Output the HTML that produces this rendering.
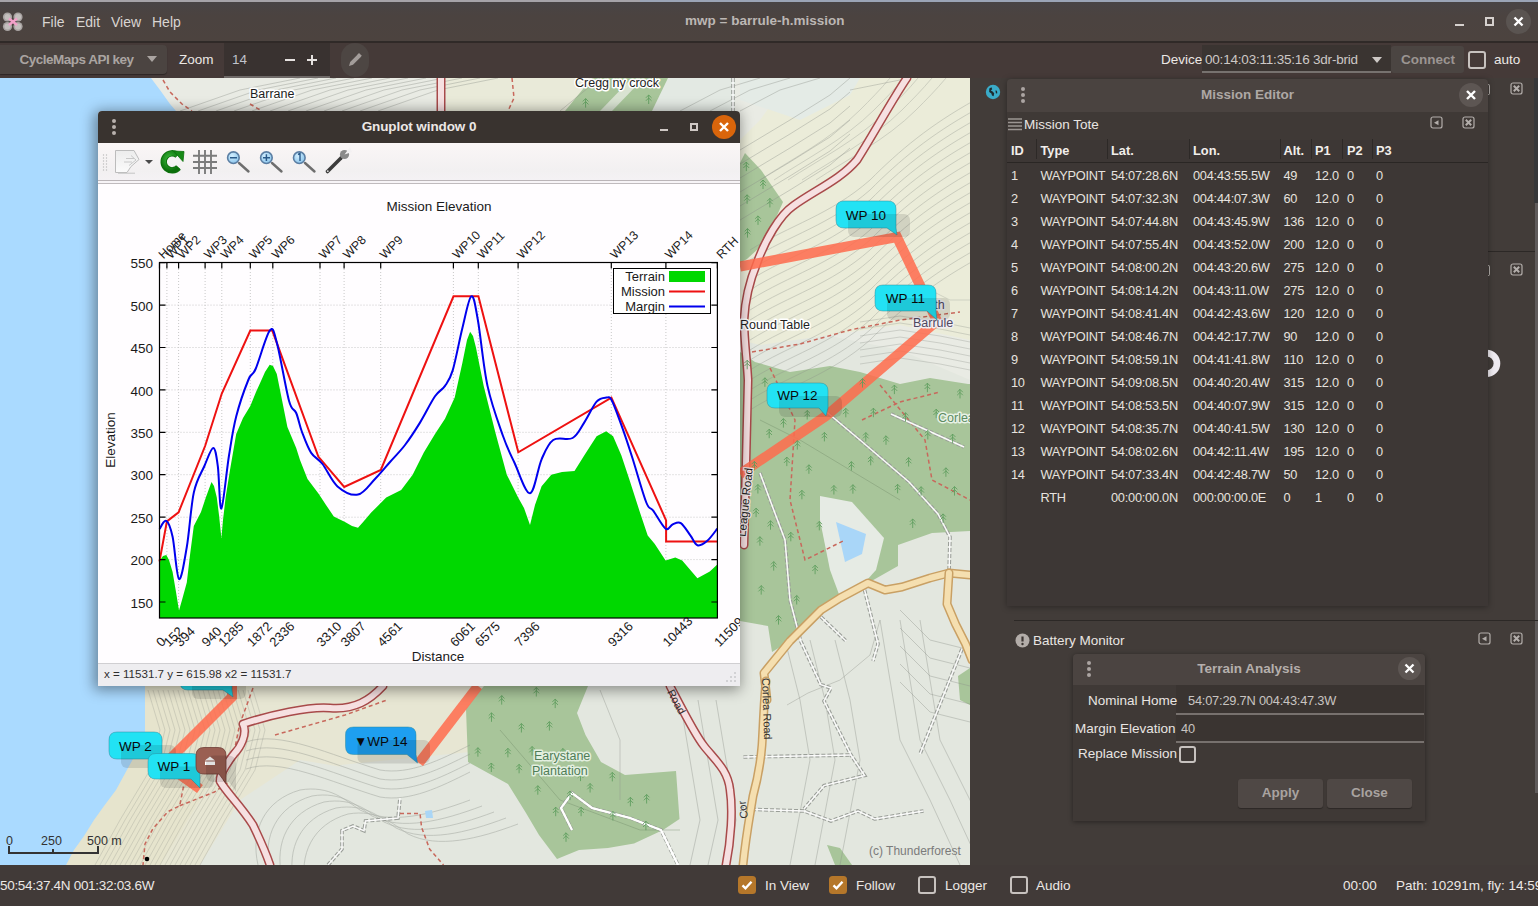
<!DOCTYPE html>
<html><head><meta charset="utf-8">
<style>
*{margin:0;padding:0;box-sizing:border-box}
html,body{width:1538px;height:906px;overflow:hidden;background:#3d3836;font-family:"Liberation Sans",sans-serif}
.a{position:absolute}
.t{position:absolute;white-space:nowrap;line-height:1}
#topline{left:0;top:0;width:1538px;height:2px;background:#a5a3a8}
#titlebar{left:0;top:2px;width:1538px;height:40px;background:linear-gradient(#484445,#4b4340 35%,#4c433f);border-bottom:1px solid #2f2a28}
#toolbar{left:0;top:42px;width:1538px;height:36px;background:#453a38;border-top:1px solid #302927}
#map{left:0;top:78px;width:970px;height:787px;background:#e6e8df;overflow:hidden}
#right{left:970px;top:78px;width:568px;height:787px;background:#423c39}
#status{left:0;top:865px;width:1538px;height:41px;background:#413a38}
#gp{left:98px;top:111px;width:642px;height:575px;background:#fffdff;border-radius:4px 4px 0 0;box-shadow:-2px 2px 14px 2px rgba(0,0,0,.4)}
#gptitle{left:0;top:0;width:642px;height:32px;background:#39332f;border-radius:4px 4px 0 0}
#gptool{left:0;top:32px;width:642px;height:41px;background:linear-gradient(#faf6f6,#f2f0f1 70%,#f5f2f5);border-bottom:1px solid #c0bbbe;box-shadow:inset 0 -2px 0 #f7f4f7,inset 0 -3px 0 #bbb5b8}
#gpstat{left:0;top:552px;width:642px;height:23px;background:#eeedf0;border-top:1px solid #d0cfd2}
.menu{font-size:14px;color:#d9d5d2;top:14.5px}
.tb{font-size:13.5px;color:#ece8e5}
.tbl{font-size:12.8px;color:#e6e2df;letter-spacing:-0.25px}
.hdr{font-size:12.8px;color:#f2eeeb;font-weight:bold}
.ck{position:absolute;width:18px;height:18px;border-radius:3px}
.ckon{background:#b5772a}
.ckoff{border:2px solid #c7c2bf}
</style></head><body>
<div id="topline" class="a"></div>
<div class="a" style="left:640px;top:0;width:898px;height:2px;background:#9aa4b6"></div>
<div id="titlebar" class="a"></div>
<!-- logo -->
<svg class="a" style="left:2px;top:12px" width="22" height="20" viewBox="0 0 22 20">
<g fill="#a9a4a2"><circle cx="5.5" cy="5" r="4.6"/><circle cx="16" cy="5" r="4.6"/><circle cx="5.5" cy="14.5" r="4.6"/><circle cx="16" cy="14.5" r="4.6"/></g>
<g fill="#c4bfbd"><circle cx="5.5" cy="5" r="3"/><circle cx="16" cy="5" r="3"/><circle cx="5.5" cy="14.5" r="3"/><circle cx="16" cy="14.5" r="3"/></g>
<path d="M7 6.5L15 13M15 6.5L7 13" stroke="#f2a0c8" stroke-width="2.6"/>
</svg>
<div class="t menu" style="left:42px">File</div>
<div class="t menu" style="left:76px">Edit</div>
<div class="t menu" style="left:111px">View</div>
<div class="t menu" style="left:152px">Help</div>
<div class="t" style="left:685px;top:14px;font-size:13.5px;font-weight:bold;color:#bcb7b4">mwp = barrule-h.mission</div>
<div class="a" style="left:1455px;top:24px;width:9px;height:2px;background:#d6d1ce"></div>
<div class="a" style="left:1485px;top:17px;width:9px;height:9px;border:2px solid #d6d1ce"></div>
<div class="a" style="left:1506px;top:9px;width:25px;height:25px;border-radius:13px;background:#5a5451"></div>
<svg class="a" style="left:1506px;top:9px" width="25" height="25"><path d="M8.5 8.5L16.5 16.5M16.5 8.5L8.5 16.5" stroke="#fff" stroke-width="2.4"/></svg>
<div id="toolbar" class="a"></div>
<!-- combo -->
<div class="a" style="left:0;top:45px;width:167px;height:29px;background:#4b4441;border-radius:0 4px 4px 0;box-shadow:0 1px 1px rgba(0,0,0,.35)"></div>
<div class="t" style="left:19.5px;top:53px;font-size:13.5px;font-weight:bold;color:#aaa4a1;letter-spacing:-0.5px">CycleMaps API key</div>
<svg class="a" style="left:147px;top:56px" width="10" height="6"><path d="M0 0h10L5 6z" fill="#aaa4a1"/></svg>
<div class="t tb" style="left:179px;top:53px">Zoom</div>
<div class="a" style="left:224px;top:43px;width:106px;height:35px;background:#393230;border-bottom:2px solid #6f6a68"></div>
<div class="t" style="left:232px;top:53px;font-size:13.5px;color:#c0c3cc">14</div>
<div class="a" style="left:285px;top:59px;width:10px;height:2px;background:#e6e2e0"></div>
<div class="a" style="left:307px;top:59px;width:10px;height:2px;background:#e6e2e0"></div>
<div class="a" style="left:311px;top:55px;width:2px;height:10px;background:#e6e2e0"></div>
<div class="a" style="left:341px;top:43px;width:28px;height:34px;border-radius:14px;background:#4d4643"></div>
<svg class="a" style="left:346px;top:51px" width="18" height="18"><path d="M3 15l1.2-4 8-8 2.8 2.8-8 8z" fill="#a39d9a"/><path d="M11.5 3.5l1.5-1.5 2.8 2.8-1.5 1.5z" fill="#a39d9a"/></svg>
<div class="t tb" style="left:1161px;top:53px">Device</div>
<div class="a" style="left:1202px;top:45px;width:189px;height:28px;background:#3a3431;border-bottom:2px solid #77726f"></div>
<div class="t" style="left:1205px;top:53px;font-size:13.5px;color:#cdc8c5;letter-spacing:-0.2px">00:14:03:11:35:16 3dr-brid</div>
<svg class="a" style="left:1372px;top:57px" width="10" height="6"><path d="M0 0h10L5 6z" fill="#cdc8c5"/></svg>
<div class="a" style="left:1391px;top:46px;width:73px;height:27px;background:#4b4542;border-radius:3px"></div>
<div class="t" style="left:1401px;top:53px;font-size:13.5px;font-weight:bold;color:#9b9592">Connect</div>
<div class="ck ckoff" style="left:1468px;top:51px"></div>
<div class="t tb" style="left:1494px;top:53px">auto</div>
<div id="map" class="a">
<svg class="a" style="left:0;top:0" width="970" height="787" viewBox="0 78 970 787">
<rect x="0" y="78" width="970" height="787" fill="#e3e7df"/>
<path d="M150 78H970V380L900 350L800 330L740 300V111H150Z" fill="#e9ebe4"/>
<path d="M790 78H970V340L900 325L830 335L760 345L740 340V140L760 120Z" fill="#ebecd9"/>
<path d="M740 100L800 120L850 95L860 78H740Z" fill="#e4ebe6"/>
<path d="M446 78H600L565 111H446Z" fill="#e9ead9"/>
<path d="M668 78H735V111H652Z" fill="#e3e9e3"/>
<path d="M145 686H500L470 760L360 770L300 760L240 800L200 865H66Z" fill="#e7e6d3"/>
<path d="M340 765L470 752L500 800L540 865H335Z" fill="#e3e7df"/>
<path d="M145 686H250L235 740L200 800L160 865H66L140 740Z" fill="#e6e4cd"/>
<path d="M0 78H151L160 90L170 104L176 111L176 686L145 686V733L138 750L128 768L116 790L104 806L94 820L84 836L74 850L66 865H0Z" fill="#aadaff"/>
<path d="M565 111L592 78H668L652 111Z" fill="#a8c59a"/>
<path d="M600 111L628 82L638 84L612 111Z" fill="#d9e3d2"/>
<path d="M740 163L745 153L761 170L783 202L775 220L758 249L747 259L740 263Z" fill="#a8c59a"/>
<path d="M740 352L755 362L790 372L830 366L860 372L900 384L930 378L968 384L970 384V531L932 533L898 545V566L868 583L840 597L821 610L790 641L772 652L768 626L740 621Z" fill="#a8c59a"/>
<path d="M484 686H588L577 713L585.5 735L601 762L625 775L676 771L679.5 819L663 830L634 843.5L608 848L579 850L557 859L539 835L526 813L508 784L468 762L466 709Z" fill="#a8c59a"/>
<path d="M827 845L840 848L852 865H835Z" fill="#a8c59a"/>
<path d="M958 676L970 668V705L960 700Z" fill="#a8c59a"/>
<path d="M820 496L852 502L884 538L876 570L858 590L840 597L830 570L820 520Z" fill="#e6ebe4"/>
<path d="M836 522L866 534L862 554L845 562Z" fill="#a9d6f8"/>
<g fill="none" stroke="#8d918a" stroke-width="0.70" opacity="0.55" stroke-linejoin="round"><path d="M740.0 150.0 L790.0 120.0 L830.0 95.0 L850.0 78.0"/><path d="M740.0 164.0 L790.0 134.0 L830.0 109.0 L850.0 92.0"/><path d="M740.0 178.0 L790.0 148.0 L830.0 123.0 L850.0 106.0"/><path d="M740.0 192.0 L790.0 162.0 L830.0 137.0 L850.0 120.0"/><path d="M740.0 206.0 L790.0 176.0 L830.0 151.0 L850.0 134.0"/><path d="M740.0 220.0 L790.0 190.0 L830.0 165.0 L850.0 148.0"/></g>
<g fill="none" stroke="#8d918a" stroke-width="0.70" opacity="0.50"><path transform="translate(0.0 0.0)" d="M750 250C790 225 830 215 870 180C900 150 930 125 975 100"/><path transform="translate(0.0 10.0)" d="M750 250C790 225 830 215 870 180C900 150 930 125 975 100"/><path transform="translate(0.0 20.0)" d="M750 250C790 225 830 215 870 180C900 150 930 125 975 100"/><path transform="translate(0.0 30.0)" d="M750 250C790 225 830 215 870 180C900 150 930 125 975 100"/><path transform="translate(0.0 40.0)" d="M750 250C790 225 830 215 870 180C900 150 930 125 975 100"/><path transform="translate(0.0 50.0)" d="M750 250C790 225 830 215 870 180C900 150 930 125 975 100"/><path transform="translate(0.0 60.0)" d="M750 250C790 225 830 215 870 180C900 150 930 125 975 100"/><path transform="translate(0.0 70.0)" d="M750 250C790 225 830 215 870 180C900 150 930 125 975 100"/><path transform="translate(0.0 80.0)" d="M750 250C790 225 830 215 870 180C900 150 930 125 975 100"/><path transform="translate(0.0 90.0)" d="M750 250C790 225 830 215 870 180C900 150 930 125 975 100"/><path transform="translate(0.0 100.0)" d="M750 250C790 225 830 215 870 180C900 150 930 125 975 100"/><path transform="translate(0.0 110.0)" d="M750 250C790 225 830 215 870 180C900 150 930 125 975 100"/><path transform="translate(0.0 120.0)" d="M750 250C790 225 830 215 870 180C900 150 930 125 975 100"/><path transform="translate(0.0 130.0)" d="M750 250C790 225 830 215 870 180C900 150 930 125 975 100"/><path transform="translate(0.0 140.0)" d="M750 250C790 225 830 215 870 180C900 150 930 125 975 100"/><path transform="translate(0.0 150.0)" d="M750 250C790 225 830 215 870 180C900 150 930 125 975 100"/><path transform="translate(0.0 160.0)" d="M750 250C790 225 830 215 870 180C900 150 930 125 975 100"/></g>
<g fill="none" stroke="#8d918a" stroke-width="0.70" opacity="0.55" stroke-linejoin="round"><path d="M850.0 90.0 L900.0 80.0"/></g>
<g fill="none" stroke="#8d918a" stroke-width="0.70" opacity="0.45"><path transform="translate(0.0 0.0)" d="M760 180C790 160 830 140 860 110C870 100 880 90 890 78"/><path transform="translate(14.0 0.0)" d="M760 180C790 160 830 140 860 110C870 100 880 90 890 78"/><path transform="translate(28.0 0.0)" d="M760 180C790 160 830 140 860 110C870 100 880 90 890 78"/><path transform="translate(42.0 0.0)" d="M760 180C790 160 830 140 860 110C870 100 880 90 890 78"/><path transform="translate(56.0 0.0)" d="M760 180C790 160 830 140 860 110C870 100 880 90 890 78"/></g>
<g fill="none" stroke="#8d918a" stroke-width="0.70" opacity="0.45" stroke-linejoin="round"><path d="M860.0 322.0 L900.0 316.0 L940.0 322.0 L970.0 328.0"/><path d="M860.0 329.0 L900.0 323.0 L940.0 329.0 L970.0 335.0"/><path d="M860.0 336.0 L900.0 330.0 L940.0 336.0 L970.0 342.0"/><path d="M860.0 343.0 L900.0 337.0 L940.0 343.0 L970.0 349.0"/><path d="M860.0 350.0 L900.0 344.0 L940.0 350.0 L970.0 356.0"/><path d="M860.0 357.0 L900.0 351.0 L940.0 357.0 L970.0 363.0"/><path d="M860.0 364.0 L900.0 358.0 L940.0 364.0 L970.0 370.0"/></g>
<g fill="none" stroke="#8d918a" stroke-width="0.70" opacity="0.40" stroke-linejoin="round"><path d="M930.0 290.0 L950.0 300.0 L970.0 300.0"/></g>
<g fill="none" stroke="#8d918a" stroke-width="0.70" opacity="0.55" stroke-linejoin="round"><path d="M180.0 111.0 L240.0 90.0 L300.0 78.0"/><path d="M198.0 111.0 L258.0 90.0 L318.0 78.0"/><path d="M216.0 111.0 L276.0 90.0 L336.0 78.0"/><path d="M234.0 111.0 L294.0 90.0 L354.0 78.0"/><path d="M252.0 111.0 L312.0 90.0 L372.0 78.0"/><path d="M270.0 111.0 L330.0 90.0 L390.0 78.0"/><path d="M288.0 111.0 L348.0 90.0 L408.0 78.0"/><path d="M306.0 111.0 L366.0 90.0 L426.0 78.0"/><path d="M324.0 111.0 L384.0 90.0 L444.0 78.0"/><path d="M342.0 111.0 L402.0 90.0 L462.0 78.0"/><path d="M360.0 111.0 L420.0 90.0 L480.0 78.0"/><path d="M378.0 111.0 L438.0 90.0 L498.0 78.0"/></g>
<g fill="none" stroke="#8d918a" stroke-width="0.70" opacity="0.55" stroke-linejoin="round"><path d="M560.0 111.0 L600.0 78.0"/></g>
<g fill="none" stroke="#8d918a" stroke-width="0.70" opacity="0.55" stroke-linejoin="round"><path d="M680.0 111.0 L720.0 90.0 L760.0 78.0"/><path d="M710.0 111.0 L750.0 90.0 L790.0 78.0"/><path d="M740.0 111.0 L780.0 90.0 L820.0 78.0"/></g>
<g fill="none" stroke="#8d918a" stroke-width="0.55" opacity="0.50" stroke-linejoin="round"><path d="M148.0 690.0 L160.0 730.0 L150.0 770.0 L120.0 820.0 L95.0 865.0"/><path d="M153.0 690.0 L165.0 730.0 L155.0 770.0 L125.0 820.0 L100.0 865.0"/><path d="M158.0 690.0 L170.0 730.0 L160.0 770.0 L130.0 820.0 L105.0 865.0"/><path d="M163.0 690.0 L175.0 730.0 L165.0 770.0 L135.0 820.0 L110.0 865.0"/><path d="M168.0 690.0 L180.0 730.0 L170.0 770.0 L140.0 820.0 L115.0 865.0"/><path d="M173.0 690.0 L185.0 730.0 L175.0 770.0 L145.0 820.0 L120.0 865.0"/><path d="M178.0 690.0 L190.0 730.0 L180.0 770.0 L150.0 820.0 L125.0 865.0"/><path d="M183.0 690.0 L195.0 730.0 L185.0 770.0 L155.0 820.0 L130.0 865.0"/><path d="M188.0 690.0 L200.0 730.0 L190.0 770.0 L160.0 820.0 L135.0 865.0"/><path d="M193.0 690.0 L205.0 730.0 L195.0 770.0 L165.0 820.0 L140.0 865.0"/><path d="M198.0 690.0 L210.0 730.0 L200.0 770.0 L170.0 820.0 L145.0 865.0"/><path d="M203.0 690.0 L215.0 730.0 L205.0 770.0 L175.0 820.0 L150.0 865.0"/><path d="M208.0 690.0 L220.0 730.0 L210.0 770.0 L180.0 820.0 L155.0 865.0"/><path d="M213.0 690.0 L225.0 730.0 L215.0 770.0 L185.0 820.0 L160.0 865.0"/><path d="M218.0 690.0 L230.0 730.0 L220.0 770.0 L190.0 820.0 L165.0 865.0"/><path d="M223.0 690.0 L235.0 730.0 L225.0 770.0 L195.0 820.0 L170.0 865.0"/><path d="M228.0 690.0 L240.0 730.0 L230.0 770.0 L200.0 820.0 L175.0 865.0"/><path d="M233.0 690.0 L245.0 730.0 L235.0 770.0 L205.0 820.0 L180.0 865.0"/><path d="M238.0 690.0 L250.0 730.0 L240.0 770.0 L210.0 820.0 L185.0 865.0"/><path d="M243.0 690.0 L255.0 730.0 L245.0 770.0 L215.0 820.0 L190.0 865.0"/><path d="M248.0 690.0 L260.0 730.0 L250.0 770.0 L220.0 820.0 L195.0 865.0"/><path d="M253.0 690.0 L265.0 730.0 L255.0 770.0 L225.0 820.0 L200.0 865.0"/></g>
<g fill="none" stroke="#8d918a" stroke-width="0.70" opacity="0.55"><path transform="translate(0.0 0.0)" d="M246 742C280 730 330 755 380 770C410 775 440 760 470 745"/><path transform="translate(0.0 9.0)" d="M246 742C280 730 330 755 380 770C410 775 440 760 470 745"/><path transform="translate(0.0 18.0)" d="M246 742C280 730 330 755 380 770C410 775 440 760 470 745"/><path transform="translate(0.0 27.0)" d="M246 742C280 730 330 755 380 770C410 775 440 760 470 745"/></g>
<g fill="none" stroke="#8d918a" stroke-width="0.70" opacity="0.55"><path transform="translate(0.0 0.0)" d="M258 865C250 830 265 800 300 790C330 785 345 800 360 810C390 825 430 815 470 800"/><path transform="translate(12.0 6.0)" d="M258 865C250 830 265 800 300 790C330 785 345 800 360 810C390 825 430 815 470 800"/><path transform="translate(24.0 12.0)" d="M258 865C250 830 265 800 300 790C330 785 345 800 360 810C390 825 430 815 470 800"/><path transform="translate(36.0 18.0)" d="M258 865C250 830 265 800 300 790C330 785 345 800 360 810C390 825 430 815 470 800"/><path transform="translate(48.0 24.0)" d="M258 865C250 830 265 800 300 790C330 785 345 800 360 810C390 825 430 815 470 800"/></g>
<g fill="none" stroke="#8d918a" stroke-width="0.70" opacity="0.55" stroke-linejoin="round"><path d="M680.0 700.0 L690.0 760.0 L700.0 820.0 L690.0 865.0"/><path d="M698.0 700.0 L708.0 760.0 L718.0 820.0 L708.0 865.0"/><path d="M716.0 700.0 L726.0 760.0 L736.0 820.0 L726.0 865.0"/></g>
<g fill="none" stroke="#8d918a" stroke-width="0.70" opacity="0.55" stroke-linejoin="round"><path d="M600.0 690.0 L620.0 740.0 L620.0 800.0"/></g>
<g fill="none" stroke="#8d918a" stroke-width="0.70" opacity="0.55" stroke-linejoin="round"><path d="M787.0 705.0 L808.0 693.0 L840.0 680.0 L870.0 655.0 L880.0 620.0"/></g>
<g fill="none" stroke="#8d918a" stroke-width="0.70" opacity="0.55" stroke-linejoin="round"><path d="M880.0 620.0 L890.0 680.0 L900.0 740.0 L930.0 800.0 L960.0 865.0"/><path d="M900.0 620.0 L910.0 680.0 L920.0 740.0 L950.0 800.0 L980.0 865.0"/><path d="M920.0 620.0 L930.0 680.0 L940.0 740.0 L970.0 800.0 L1000.0 865.0"/></g>
<g fill="none" stroke="#8d918a" stroke-width="0.70" opacity="0.55" stroke-linejoin="round"><path d="M785.0 640.0 L800.0 700.0 L810.0 760.0 L790.0 865.0"/><path d="M810.0 640.0 L825.0 700.0 L835.0 760.0 L815.0 865.0"/><path d="M835.0 640.0 L850.0 700.0 L860.0 760.0 L840.0 865.0"/></g>
<g fill="none" stroke="#8d918a" stroke-width="0.70" opacity="0.55" stroke-linejoin="round"><path d="M900.0 610.0 L930.0 640.0 L970.0 650.0"/><path d="M900.0 628.0 L930.0 658.0 L970.0 668.0"/><path d="M900.0 646.0 L930.0 676.0 L970.0 686.0"/><path d="M900.0 664.0 L930.0 694.0 L970.0 704.0"/><path d="M900.0 682.0 L930.0 712.0 L970.0 722.0"/></g>
<g fill="none" stroke="#6f8a66" stroke-width="0.70" opacity="0.55" stroke-linejoin="round"><path d="M760.0 420.0 L800.0 440.0 L850.0 470.0 L900.0 500.0"/></g>
<g fill="none" stroke="#6f8a66" stroke-width="0.70" opacity="0.55" stroke-linejoin="round"><path d="M500.0 730.0 L560.0 800.0 L640.0 830.0 L680.0 830.0"/></g>
<path d="M163 80L170 92L182 104L192 111" fill="none" stroke="#c8685c" stroke-width="1.5" stroke-dasharray="4 3"/>
<path d="M250 104L262 111" fill="none" stroke="#c8685c" stroke-width="1.5" stroke-dasharray="4 3"/>
<path d="M512 78L514 98L508 111" fill="none" stroke="#c8685c" stroke-width="1.5" stroke-dasharray="4 3"/>
<path d="M752 352L800 344L850 330L900 320L960 312" fill="none" stroke="#c8685c" stroke-width="1.5" stroke-dasharray="4 3"/>
<path d="M770 368L795 420L790 500L805 560L845 540" fill="none" stroke="#c8685c" stroke-width="1.5" stroke-dasharray="4 3"/>
<path d="M880 385L925 440L932 480L970 500" fill="none" stroke="#c8685c" stroke-width="1.5" stroke-dasharray="4 3"/>
<path d="M862 420L900 402L940 392" fill="none" stroke="#c8685c" stroke-width="1.5" stroke-dasharray="4 3"/>
<path d="M253 688L239.5 725L233.7 754" fill="none" stroke="#c8685c" stroke-width="1.5" stroke-dasharray="4 3"/>
<path d="M275 735L345 715L387 700" fill="none" stroke="#c8685c" stroke-width="1.5" stroke-dasharray="4 3"/>
<path d="M183.5 786.5L179.7 805.8L168 811.6L152.7 829L145 844L143 865" fill="none" stroke="#c8685c" stroke-width="1.5" stroke-dasharray="4 3"/>
<path d="M179.7 805.8L214.4 792L228 782.7" fill="none" stroke="#c8685c" stroke-width="1.5" stroke-dasharray="4 3"/>
<path d="M733 78V111" fill="none" stroke="#9a9e98" stroke-width="3.6" stroke-dasharray="4 2"/>
<path d="M733 78V111" fill="none" stroke="#fafafa" stroke-width="1.5"/>
<path d="M760 473L770 500L785 540L790 600L800.6 640.8L820.8 684.6L831 688L824 701L851 755L864.6 775.5L824 785.6L804 809" fill="none" stroke="#9a9e98" stroke-width="3.6" stroke-dasharray="4 2"/>
<path d="M760 473L770 500L785 540L790 600L800.6 640.8L820.8 684.6L831 688L824 701L851 755L864.6 775.5L824 785.6L804 809" fill="none" stroke="#fafafa" stroke-width="1.5"/>
<path d="M743.4 757L851 755" fill="none" stroke="#9a9e98" stroke-width="3.6" stroke-dasharray="4 2"/>
<path d="M743.4 757L851 755" fill="none" stroke="#fafafa" stroke-width="1.5"/>
<path d="M740 809L804 811L831 821L858 811L874.7 819L923.5 811" fill="none" stroke="#9a9e98" stroke-width="3.6" stroke-dasharray="4 2"/>
<path d="M740 809L804 811L831 821L858 811L874.7 819L923.5 811" fill="none" stroke="#fafafa" stroke-width="1.5"/>
<path d="M864.6 590L878 644L873 661" fill="none" stroke="#9a9e98" stroke-width="3.6" stroke-dasharray="4 2"/>
<path d="M864.6 590L878 644L873 661" fill="none" stroke="#fafafa" stroke-width="1.5"/>
<path d="M962 649L920 754" fill="none" stroke="#9a9e98" stroke-width="3.6" stroke-dasharray="4 2"/>
<path d="M962 649L920 754" fill="none" stroke="#fafafa" stroke-width="1.5"/>
<path d="M821 617L846 641" fill="none" stroke="#9a9e98" stroke-width="3.6" stroke-dasharray="4 2"/>
<path d="M821 617L846 641" fill="none" stroke="#fafafa" stroke-width="1.5"/>
<path d="M810 398L860 440L909 482L938 514L950 537L949 573" fill="none" stroke="#9a9e98" stroke-width="3.6" stroke-dasharray="4 2"/>
<path d="M810 398L860 440L909 482L938 514L950 537L949 573" fill="none" stroke="#fafafa" stroke-width="1.5"/>
<path d="M891 414L964 447" fill="none" stroke="#9a9e98" stroke-width="3.6" stroke-dasharray="4 2"/>
<path d="M891 414L964 447" fill="none" stroke="#fafafa" stroke-width="1.5"/>
<path d="M572 830L561 808L572 793L592 808L630 818L661 830L678 865" fill="none" stroke="#9a9e98" stroke-width="3.6" stroke-dasharray="4 2"/>
<path d="M572 830L561 808L572 793L592 808L630 818L661 830L678 865" fill="none" stroke="#fafafa" stroke-width="1.5"/>
<path d="M328 865L342 849L342 830.6L353 826L364 830.6L365.5 821L398 818L400 798" fill="none" stroke="#9a9e98" stroke-width="3.6" stroke-dasharray="4 2"/>
<path d="M328 865L342 849L342 830.6L353 826L364 830.6L365.5 821L398 818L400 798" fill="none" stroke="#fafafa" stroke-width="1.5"/>
<path d="M400 813.4L420 813.4L421.6 827.4L429.6 849L443.5 865" fill="none" stroke="#c8685c" stroke-width="1.5" stroke-dasharray="4 3"/>
<path d="M425 811L432 810L433 818L426 818Z" fill="#aad6f6"/>
<path d="M572 830L561 808L572 793L592 808L630 818L661 830L678 865" fill="none" stroke="#fff" stroke-width="2.2"/>
<path d="M441 78V111" fill="none" stroke="#a84a4a" stroke-width="9" stroke-linejoin="round" stroke-linecap="round"/>
<path d="M441 78V111" fill="none" stroke="#f6e0e1" stroke-width="6" stroke-linejoin="round" stroke-linecap="round"/>
<path d="M907 78C895 95 870 140 857 160C840 180 815 190 793 206C780 215 765 240 757 263C750 280 745 300 744 320C744 340 747 360 748 380L744 545" fill="none" stroke="#a84a4a" stroke-width="9" stroke-linejoin="round" stroke-linecap="round"/>
<path d="M907 78C895 95 870 140 857 160C840 180 815 190 793 206C780 215 765 240 757 263C750 280 745 300 744 320C744 340 747 360 748 380L744 545" fill="none" stroke="#f6e0e1" stroke-width="6" stroke-linejoin="round" stroke-linecap="round"/>
<path d="M670 686C680 705 695 735 704 746C715 760 728 770 730 790C733 810 731 840 726 865" fill="none" stroke="#a84a4a" stroke-width="9" stroke-linejoin="round" stroke-linecap="round"/>
<path d="M670 686C680 705 695 735 704 746C715 760 728 770 730 790C733 810 731 840 726 865" fill="none" stroke="#f6e0e1" stroke-width="6" stroke-linejoin="round" stroke-linecap="round"/>
<path d="M383 686C370 700 355 710 330 708C310 706 270 715 243 724C248 734 240 748 234 754C228 762 220 772 220 781C226 792 240 805 253 825C260 840 265 850 270 865" fill="none" stroke="#a84a4a" stroke-width="9" stroke-linejoin="round" stroke-linecap="round"/>
<path d="M383 686C370 700 355 710 330 708C310 706 270 715 243 724C248 734 240 748 234 754C228 762 220 772 220 781C226 792 240 805 253 825C260 840 265 850 270 865" fill="none" stroke="#f6e0e1" stroke-width="6" stroke-linejoin="round" stroke-linecap="round"/>
<path d="M767 700L764 673L790 641L821 610L840 598L868 583L885 590L902 587L930 578L949 573L970 575" fill="none" stroke="#c9a064" stroke-width="9" stroke-linejoin="round" stroke-linecap="round"/>
<path d="M767 700L764 673L790 641L821 610L840 598L868 583L885 590L902 587L930 578L949 573L970 575" fill="none" stroke="#f5dfb0" stroke-width="6" stroke-linejoin="round" stroke-linecap="round"/>
<path d="M949 573L947 604L955.5 624L965.6 644L972 660" fill="none" stroke="#c9a064" stroke-width="9" stroke-linejoin="round" stroke-linecap="round"/>
<path d="M949 573L947 604L955.5 624L965.6 644L972 660" fill="none" stroke="#f5dfb0" stroke-width="6" stroke-linejoin="round" stroke-linecap="round"/>
<path d="M766 681C764 700 763 730 762 745C760 770 756 785 753 796C750 815 746 835 743 865" fill="none" stroke="#c9a064" stroke-width="9" stroke-linejoin="round" stroke-linecap="round"/>
<path d="M766 681C764 700 763 730 762 745C760 770 756 785 753 796C750 815 746 835 743 865" fill="none" stroke="#f5dfb0" stroke-width="6" stroke-linejoin="round" stroke-linecap="round"/>
<g fill="none" stroke="#ff6b4c" stroke-opacity=".85" stroke-width="10" stroke-linejoin="miter" stroke-linecap="butt">
<path d="M740 266.5L897 237L937 321L826 416L740 474"/>
<path d="M200 789L165 764L232 697V680"/>
<path d="M419 763L478 686"/>
</g>
<path d="M501.7 695.6l2.8 2.8M501.7 695.6l-2.8 2.8M501.7 698.6l2.8 2.8M501.7 698.6l-2.8 2.8M501.7 695.6v9M536.3 687.5l2.8 2.8M536.3 687.5l-2.8 2.8M536.3 690.5l2.8 2.8M536.3 690.5l-2.8 2.8M536.3 687.5v9M555.2 699.1l2.8 2.8M555.2 699.1l-2.8 2.8M555.2 702.1l2.8 2.8M555.2 702.1l-2.8 2.8M555.2 699.1v9M491.5 712.8l2.8 2.8M491.5 712.8l-2.8 2.8M491.5 715.8l2.8 2.8M491.5 715.8l-2.8 2.8M491.5 712.8v9M521.4 723.5l2.8 2.8M521.4 723.5l-2.8 2.8M521.4 726.5l2.8 2.8M521.4 726.5l-2.8 2.8M521.4 723.5v9M549.4 721.6l2.8 2.8M549.4 721.6l-2.8 2.8M549.4 724.6l2.8 2.8M549.4 724.6l-2.8 2.8M549.4 721.6v9M477.9 747.7l2.8 2.8M477.9 747.7l-2.8 2.8M477.9 750.7l2.8 2.8M477.9 750.7l-2.8 2.8M477.9 747.7v9M507.9 748.3l2.8 2.8M507.9 748.3l-2.8 2.8M507.9 751.3l2.8 2.8M507.9 751.3l-2.8 2.8M507.9 748.3v9M532.1 746.5l2.8 2.8M532.1 746.5l-2.8 2.8M532.1 749.5l2.8 2.8M532.1 749.5l-2.8 2.8M532.1 746.5v9M563.0 748.5l2.8 2.8M563.0 748.5l-2.8 2.8M563.0 751.5l2.8 2.8M563.0 751.5l-2.8 2.8M563.0 748.5v9M491.3 763.0l2.8 2.8M491.3 763.0l-2.8 2.8M491.3 766.0l2.8 2.8M491.3 766.0l-2.8 2.8M491.3 763.0v9M519.1 764.3l2.8 2.8M519.1 764.3l-2.8 2.8M519.1 767.3l2.8 2.8M519.1 767.3l-2.8 2.8M519.1 764.3v9M546.3 767.3l2.8 2.8M546.3 767.3l-2.8 2.8M546.3 770.3l2.8 2.8M546.3 770.3l-2.8 2.8M546.3 767.3v9M580.5 772.1l2.8 2.8M580.5 772.1l-2.8 2.8M580.5 775.1l2.8 2.8M580.5 775.1l-2.8 2.8M580.5 772.1v9M612.3 772.4l2.8 2.8M612.3 772.4l-2.8 2.8M612.3 775.4l2.8 2.8M612.3 775.4l-2.8 2.8M612.3 772.4v9M537.8 785.7l2.8 2.8M537.8 785.7l-2.8 2.8M537.8 788.7l2.8 2.8M537.8 788.7l-2.8 2.8M537.8 785.7v9M570.0 791.1l2.8 2.8M570.0 791.1l-2.8 2.8M570.0 794.1l2.8 2.8M570.0 794.1l-2.8 2.8M570.0 791.1v9M590.1 783.5l2.8 2.8M590.1 783.5l-2.8 2.8M590.1 786.5l2.8 2.8M590.1 786.5l-2.8 2.8M590.1 783.5v9M630.4 797.3l2.8 2.8M630.4 797.3l-2.8 2.8M630.4 800.3l2.8 2.8M630.4 800.3l-2.8 2.8M630.4 797.3v9M646.6 794.5l2.8 2.8M646.6 794.5l-2.8 2.8M646.6 797.5l2.8 2.8M646.6 797.5l-2.8 2.8M646.6 794.5v9M555.7 807.2l2.8 2.8M555.7 807.2l-2.8 2.8M555.7 810.2l2.8 2.8M555.7 810.2l-2.8 2.8M555.7 807.2v9M581.1 807.2l2.8 2.8M581.1 807.2l-2.8 2.8M581.1 810.2l2.8 2.8M581.1 810.2l-2.8 2.8M581.1 807.2v9M612.9 811.5l2.8 2.8M612.9 811.5l-2.8 2.8M612.9 814.5l2.8 2.8M612.9 814.5l-2.8 2.8M612.9 811.5v9M645.9 821.2l2.8 2.8M645.9 821.2l-2.8 2.8M645.9 824.2l2.8 2.8M645.9 824.2l-2.8 2.8M645.9 821.2v9M566.0 832.8l2.8 2.8M566.0 832.8l-2.8 2.8M566.0 835.8l2.8 2.8M566.0 835.8l-2.8 2.8M566.0 832.8v9M747.2 360.3l2.8 2.8M747.2 360.3l-2.8 2.8M747.2 363.3l2.8 2.8M747.2 363.3l-2.8 2.8M747.2 360.3v9M764.9 377.8l2.8 2.8M764.9 377.8l-2.8 2.8M764.9 380.8l2.8 2.8M764.9 380.8l-2.8 2.8M764.9 377.8v9M794.4 386.9l2.8 2.8M794.4 386.9l-2.8 2.8M794.4 389.9l2.8 2.8M794.4 389.9l-2.8 2.8M794.4 386.9v9M818.8 387.5l2.8 2.8M818.8 387.5l-2.8 2.8M818.8 390.5l2.8 2.8M818.8 390.5l-2.8 2.8M818.8 387.5v9M862.5 378.6l2.8 2.8M862.5 378.6l-2.8 2.8M862.5 381.6l2.8 2.8M862.5 381.6l-2.8 2.8M862.5 378.6v9M894.4 385.1l2.8 2.8M894.4 385.1l-2.8 2.8M894.4 388.1l2.8 2.8M894.4 388.1l-2.8 2.8M894.4 385.1v9M927.4 383.2l2.8 2.8M927.4 383.2l-2.8 2.8M927.4 386.2l2.8 2.8M927.4 386.2l-2.8 2.8M927.4 383.2v9M960.0 389.4l2.8 2.8M960.0 389.4l-2.8 2.8M960.0 392.4l2.8 2.8M960.0 392.4l-2.8 2.8M960.0 389.4v9M783.4 418.6l2.8 2.8M783.4 418.6l-2.8 2.8M783.4 421.6l2.8 2.8M783.4 421.6l-2.8 2.8M783.4 418.6v9M807.2 410.5l2.8 2.8M807.2 410.5l-2.8 2.8M807.2 413.5l2.8 2.8M807.2 413.5l-2.8 2.8M807.2 410.5v9M845.8 408.3l2.8 2.8M845.8 408.3l-2.8 2.8M845.8 411.3l2.8 2.8M845.8 411.3l-2.8 2.8M845.8 408.3v9M873.4 408.2l2.8 2.8M873.4 408.2l-2.8 2.8M873.4 411.2l2.8 2.8M873.4 411.2l-2.8 2.8M873.4 408.2v9M905.5 412.7l2.8 2.8M905.5 412.7l-2.8 2.8M905.5 415.7l2.8 2.8M905.5 415.7l-2.8 2.8M905.5 412.7v9M936.2 409.2l2.8 2.8M936.2 409.2l-2.8 2.8M936.2 412.2l2.8 2.8M936.2 412.2l-2.8 2.8M936.2 409.2v9M769.2 429.2l2.8 2.8M769.2 429.2l-2.8 2.8M769.2 432.2l2.8 2.8M769.2 432.2l-2.8 2.8M769.2 429.2v9M797.3 440.6l2.8 2.8M797.3 440.6l-2.8 2.8M797.3 443.6l2.8 2.8M797.3 443.6l-2.8 2.8M797.3 440.6v9M824.4 432.4l2.8 2.8M824.4 432.4l-2.8 2.8M824.4 435.4l2.8 2.8M824.4 435.4l-2.8 2.8M824.4 432.4v9M865.8 432.6l2.8 2.8M865.8 432.6l-2.8 2.8M865.8 435.6l2.8 2.8M865.8 435.6l-2.8 2.8M865.8 432.6v9M886.0 435.8l2.8 2.8M886.0 435.8l-2.8 2.8M886.0 438.8l2.8 2.8M886.0 438.8l-2.8 2.8M886.0 435.8v9M927.8 430.4l2.8 2.8M927.8 430.4l-2.8 2.8M927.8 433.4l2.8 2.8M927.8 433.4l-2.8 2.8M927.8 430.4v9M952.6 434.1l2.8 2.8M952.6 434.1l-2.8 2.8M952.6 437.1l2.8 2.8M952.6 437.1l-2.8 2.8M952.6 434.1v9M754.4 461.4l2.8 2.8M754.4 461.4l-2.8 2.8M754.4 464.4l2.8 2.8M754.4 464.4l-2.8 2.8M754.4 461.4v9M786.8 457.1l2.8 2.8M786.8 457.1l-2.8 2.8M786.8 460.1l2.8 2.8M786.8 460.1l-2.8 2.8M786.8 457.1v9M808.9 464.8l2.8 2.8M808.9 464.8l-2.8 2.8M808.9 467.8l2.8 2.8M808.9 467.8l-2.8 2.8M808.9 464.8v9M851.4 461.6l2.8 2.8M851.4 461.6l-2.8 2.8M851.4 464.6l2.8 2.8M851.4 464.6l-2.8 2.8M851.4 461.6v9M870.7 456.3l2.8 2.8M870.7 456.3l-2.8 2.8M870.7 459.3l2.8 2.8M870.7 459.3l-2.8 2.8M870.7 456.3v9M908.6 457.5l2.8 2.8M908.6 457.5l-2.8 2.8M908.6 460.5l2.8 2.8M908.6 460.5l-2.8 2.8M908.6 457.5v9M945.9 467.8l2.8 2.8M945.9 467.8l-2.8 2.8M945.9 470.8l2.8 2.8M945.9 470.8l-2.8 2.8M945.9 467.8v9M757.9 484.5l2.8 2.8M757.9 484.5l-2.8 2.8M757.9 487.5l2.8 2.8M757.9 487.5l-2.8 2.8M757.9 484.5v9M801.9 490.3l2.8 2.8M801.9 490.3l-2.8 2.8M801.9 493.3l2.8 2.8M801.9 493.3l-2.8 2.8M801.9 490.3v9M833.9 485.5l2.8 2.8M833.9 485.5l-2.8 2.8M833.9 488.5l2.8 2.8M833.9 488.5l-2.8 2.8M833.9 485.5v9M852.9 484.7l2.8 2.8M852.9 484.7l-2.8 2.8M852.9 487.7l2.8 2.8M852.9 487.7l-2.8 2.8M852.9 484.7v9M897.6 484.3l2.8 2.8M897.6 484.3l-2.8 2.8M897.6 487.3l2.8 2.8M897.6 487.3l-2.8 2.8M897.6 484.3v9M921.1 486.7l2.8 2.8M921.1 486.7l-2.8 2.8M921.1 489.7l2.8 2.8M921.1 489.7l-2.8 2.8M921.1 486.7v9M954.5 486.6l2.8 2.8M954.5 486.6l-2.8 2.8M954.5 489.6l2.8 2.8M954.5 489.6l-2.8 2.8M954.5 486.6v9M756.1 508.1l2.8 2.8M756.1 508.1l-2.8 2.8M756.1 511.1l2.8 2.8M756.1 511.1l-2.8 2.8M756.1 508.1v9M770.5 520.7l2.8 2.8M770.5 520.7l-2.8 2.8M770.5 523.7l2.8 2.8M770.5 523.7l-2.8 2.8M770.5 520.7v9M819.3 521.4l2.8 2.8M819.3 521.4l-2.8 2.8M819.3 524.4l2.8 2.8M819.3 524.4l-2.8 2.8M819.3 521.4v9M912.7 519.0l2.8 2.8M912.7 519.0l-2.8 2.8M912.7 522.0l2.8 2.8M912.7 522.0l-2.8 2.8M912.7 519.0v9M943.1 513.9l2.8 2.8M943.1 513.9l-2.8 2.8M943.1 516.9l2.8 2.8M943.1 516.9l-2.8 2.8M943.1 513.9v9M759.9 536.7l2.8 2.8M759.9 536.7l-2.8 2.8M759.9 539.7l2.8 2.8M759.9 539.7l-2.8 2.8M759.9 536.7v9M790.8 532.3l2.8 2.8M790.8 532.3l-2.8 2.8M790.8 535.3l2.8 2.8M790.8 535.3l-2.8 2.8M790.8 532.3v9M773.7 561.6l2.8 2.8M773.7 561.6l-2.8 2.8M773.7 564.6l2.8 2.8M773.7 564.6l-2.8 2.8M773.7 561.6v9M815.1 565.2l2.8 2.8M815.1 565.2l-2.8 2.8M815.1 568.2l2.8 2.8M815.1 568.2l-2.8 2.8M815.1 565.2v9M761.2 585.6l2.8 2.8M761.2 585.6l-2.8 2.8M761.2 588.6l2.8 2.8M761.2 588.6l-2.8 2.8M761.2 585.6v9M796.7 595.5l2.8 2.8M796.7 595.5l-2.8 2.8M796.7 598.5l2.8 2.8M796.7 598.5l-2.8 2.8M796.7 595.5v9M778.5 615.6l2.8 2.8M778.5 615.6l-2.8 2.8M778.5 618.6l2.8 2.8M778.5 618.6l-2.8 2.8M778.5 615.6v9M746.3 162.1l2.8 2.8M746.3 162.1l-2.8 2.8M746.3 165.1l2.8 2.8M746.3 165.1l-2.8 2.8M746.3 162.1v9M763.0 180.0l2.8 2.8M763.0 180.0l-2.8 2.8M763.0 183.0l2.8 2.8M763.0 183.0l-2.8 2.8M763.0 180.0v9M747.1 194.8l2.8 2.8M747.1 194.8l-2.8 2.8M747.1 197.8l2.8 2.8M747.1 197.8l-2.8 2.8M747.1 194.8v9M769.9 198.4l2.8 2.8M769.9 198.4l-2.8 2.8M769.9 201.4l2.8 2.8M769.9 201.4l-2.8 2.8M769.9 198.4v9M758.0 215.9l2.8 2.8M758.0 215.9l-2.8 2.8M758.0 218.9l2.8 2.8M758.0 218.9l-2.8 2.8M758.0 215.9v9M747.5 228.6l2.8 2.8M747.5 228.6l-2.8 2.8M747.5 231.6l2.8 2.8M747.5 231.6l-2.8 2.8M747.5 228.6v9M585.6 98.6l2.8 2.8M585.6 98.6l-2.8 2.8M585.6 101.6l2.8 2.8M585.6 101.6l-2.8 2.8M585.6 98.6v9M648.7 95.0l2.8 2.8M648.7 95.0l-2.8 2.8M648.7 98.0l2.8 2.8M648.7 98.0l-2.8 2.8M648.7 95.0v9" fill="none" stroke="#5d9e5d" stroke-width="1" opacity=".85"/>
<text x="250" y="98" font-family="Liberation Sans" font-size="12.5" fill="#1e1e1e" stroke="#ffffff" stroke-width="3" stroke-linejoin="round" paint-order="stroke">Barrane</text>
<text x="575" y="87" font-family="Liberation Sans" font-size="12.5" fill="#1e1e1e" stroke="#ffffff" stroke-width="3" stroke-linejoin="round" paint-order="stroke">Cregg ny crock</text>
<text x="740" y="329" font-family="Liberation Sans" font-size="12.5" fill="#1e1e1e" stroke="#ffffff" stroke-width="3" stroke-linejoin="round" paint-order="stroke">Round Table</text>
<text x="912" y="309" font-family="Liberation Sans" font-size="12.5" fill="#4f4860" stroke="#f0eef2" stroke-width="3" stroke-linejoin="round" paint-order="stroke">South</text>
<text x="913" y="327" font-family="Liberation Sans" font-size="12.5" fill="#4f4860" stroke="#f0eef2" stroke-width="3" stroke-linejoin="round" paint-order="stroke">Barrule</text>
<text x="938" y="422" font-family="Liberation Sans" font-size="12.5" fill="#5d8b62" stroke="#e8f2e6" stroke-width="3" stroke-linejoin="round" paint-order="stroke">Corlea</text>
<text x="534" y="760" font-family="Liberation Sans" font-size="12.5" fill="#4f7d57" stroke="#e3efe0" stroke-width="3" stroke-linejoin="round" paint-order="stroke">Earystane</text>
<text x="532" y="775" font-family="Liberation Sans" font-size="12.5" fill="#4f7d57" stroke="#e3efe0" stroke-width="3" stroke-linejoin="round" paint-order="stroke">Plantation</text>
<text x="869" y="855" font-family="Liberation Sans" font-size="12" fill="#7b7b7b">(c) Thunderforest</text>
<g font-family="Liberation Sans" font-size="12.5" fill="#333"><text x="6" y="845">0</text><text x="41" y="845">250</text><text x="87" y="845">500 m</text></g>
<path d="M9 846V853H98V846M53 849V853" fill="none" stroke="#333" stroke-width="2"/>
<circle cx="147" cy="859" r="2.3" fill="#000"/>
<text transform="translate(745.5 537) rotate(-84)" font-family="Liberation Sans" font-size="11.5" fill="#222" stroke="#f0e6e6" stroke-width="2.5" paint-order="stroke">League Road</text>
<text transform="translate(667 692) rotate(62)" font-family="Liberation Sans" font-size="11" fill="#333">Road</text>
<text transform="translate(762 678) rotate(88)" font-family="Liberation Sans" font-size="11" fill="#333">Corlea Road</text>
<text transform="translate(748 818) rotate(-98)" font-family="Liberation Sans" font-size="11" fill="#333">Cor</text>
<path d="M188.0 662.0H224.0Q232.0 662.0 232.0 670.0V690.0L233.0 697.0L223.0 690.0H188.0Q180.0 690.0 180.0 682.0V670.0Q180.0 662.0 188.0 662.0Z" fill="#22dff2" stroke="#2a8a9a" stroke-width=".8" stroke-opacity=".6"/>
<text x="206.0" y="681.5" text-anchor="middle" font-family="Liberation Sans" font-size="13.5" fill="#0a0a0a">WP 3</text>
<rect x="192.0" y="675.0" width="54.0" height="24.0" rx="6" fill="#000" opacity=".11"/>
<path d="M844.0 201.0H888.0Q896.0 201.0 896.0 209.0V228.0L897.0 235.0L887.0 228.0H844.0Q836.0 228.0 836.0 220.0V209.0Q836.0 201.0 844.0 201.0Z" fill="#22e2f4" stroke="#2a8a9a" stroke-width=".8" stroke-opacity=".6"/>
<text x="866.0" y="219.5" text-anchor="middle" font-family="Liberation Sans" font-size="13.5" fill="#0a0a0a">WP 10</text>
<rect x="848.0" y="214.0" width="62.0" height="23.0" rx="6" fill="#000" opacity=".11"/>
<path d="M883.0 285.0H928.0Q936.0 285.0 936.0 293.0V311.0L937.0 320.0L927.0 311.0H883.0Q875.0 311.0 875.0 303.0V293.0Q875.0 285.0 883.0 285.0Z" fill="#22e2f4" stroke="#2a8a9a" stroke-width=".8" stroke-opacity=".6"/>
<text x="905.5" y="302.5" text-anchor="middle" font-family="Liberation Sans" font-size="13.5" fill="#0a0a0a">WP 11</text>
<rect x="887.0" y="298.0" width="63.0" height="22.0" rx="6" fill="#000" opacity=".11"/>
<path d="M775.0 383.0H820.0Q828.0 383.0 828.0 391.0V408.0L826.0 416.0L819.0 408.0H775.0Q767.0 408.0 767.0 400.0V391.0Q767.0 383.0 775.0 383.0Z" fill="#22e2f4" stroke="#2a8a9a" stroke-width=".8" stroke-opacity=".6"/>
<text x="797.5" y="399.5" text-anchor="middle" font-family="Liberation Sans" font-size="13.5" fill="#0a0a0a">WP 12</text>
<rect x="779.0" y="396.0" width="63.0" height="21.0" rx="6" fill="#000" opacity=".11"/>
<path d="M353.5 727.0H408.0Q416.0 727.0 416.0 735.0V754.5L417.5 763.0L407.0 754.5H353.5Q345.5 754.5 345.5 746.5V735.0Q345.5 727.0 353.5 727.0Z" fill="#1e9ff0" stroke="#2a8a9a" stroke-width=".8" stroke-opacity=".6"/>
<text x="380.8" y="746.0" text-anchor="middle" font-family="Liberation Sans" font-size="13.5" fill="#0a0a0a">&#9660;WP 14</text>
<rect x="357.5" y="740.0" width="72.5" height="23.5" rx="6" fill="#000" opacity=".11"/>
<path d="M117.0 732.0H154.0Q162.0 732.0 162.0 740.0V759.0L163.0 764.0L153.0 759.0H117.0Q109.0 759.0 109.0 751.0V740.0Q109.0 732.0 117.0 732.0Z" fill="#22e2f4" stroke="#2a8a9a" stroke-width=".8" stroke-opacity=".6"/>
<text x="135.5" y="750.5" text-anchor="middle" font-family="Liberation Sans" font-size="13.5" fill="#0a0a0a">WP 2</text>
<rect x="121.0" y="745.0" width="55.0" height="23.0" rx="6" fill="#000" opacity=".11"/>
<path d="M156.0 753.5H192.0Q200.0 753.5 200.0 761.5V779.0L200.0 788.0L191.0 779.0H156.0Q148.0 779.0 148.0 771.0V761.5Q148.0 753.5 156.0 753.5Z" fill="#22e2f4" stroke="#2a8a9a" stroke-width=".8" stroke-opacity=".6"/>
<text x="174.0" y="770.5" text-anchor="middle" font-family="Liberation Sans" font-size="13.5" fill="#0a0a0a">WP 1</text>
<rect x="160.0" y="766.5" width="54.0" height="21.5" rx="6" fill="#000" opacity=".11"/>
<path d="M204 747.5H218Q226 747.5 226 755.5V783.5L219 774H204Q196 774 196 766V755.5Q196 747.5 204 747.5Z" fill="#9a5f52" stroke="#6e3e36" stroke-width=".8"/>
<path d="M205 760.5L210 756.5L215 760.5ZM205 761.5H215V765H205Z" fill="#fff"/>
<path d="M204 747.5H218Q226 747.5 226 755.5V783.5L219 774H204Q196 774 196 766V755.5Q196 747.5 204 747.5Z" transform="translate(10 8)" fill="#000" opacity=".12"/>
</svg></div>
<div id="right" class="a"></div>
<div class="a" style="left:1487px;top:251px;width:51px;height:1px;background:#2c2826"></div>
<div class="a" style="left:1534px;top:78px;width:4px;height:125px;background:#363739"></div>
<div class="a" style="left:1535px;top:203px;width:3px;height:590px;background:#5f5b5b"></div>
<svg class="a" style="left:1509px;top:81px" width="14" height="14"><rect x="2" y="2" width="11" height="11" rx="2" fill="none" stroke="#b3aeab" stroke-width="1.2"/><path d="M4.8 4.8l5.4 5.4M10.2 4.8l-5.4 5.4" stroke="#b3aeab" stroke-width="2"/></svg>
<svg class="a" style="left:1509px;top:262px" width="14" height="14"><rect x="2" y="2" width="11" height="11" rx="2" fill="none" stroke="#b3aeab" stroke-width="1.2"/><path d="M4.8 4.8l5.4 5.4M10.2 4.8l-5.4 5.4" stroke="#b3aeab" stroke-width="2"/></svg>
<div class="a" style="left:1482px;top:84px;width:8px;height:11px;border:1.2px solid #b3aeab;border-left:none;border-radius:0 2px 2px 0"></div>
<div class="a" style="left:1482px;top:265px;width:8px;height:11px;border:1.2px solid #b3aeab;border-left:none;border-radius:0 2px 2px 0"></div>
<svg class="a" style="left:1480px;top:346px" width="24" height="36"><path d="M6.6 3.7A13.7 13.7 0 0 1 6.6 31.1V24.4A7 7 0 0 0 6.6 10.4Z" fill="#eeeaf0"/></svg>
<svg class="a" style="left:985px;top:84px" width="16" height="16"><circle cx="8" cy="8" r="7.2" fill="#3aabc8"/><path d="M4.3 4.6L6.5 3.3L7.2 5.3L5.8 6.4L7.6 7.6L9.2 9.3L8.6 12.2L7 11.6L6.4 9.6L4.2 7.9Z" fill="#1d2a2e"/><path d="M10.4 6.4L12 6.7L12.3 9.2L11 9.4Z" fill="#1d2a2e"/></svg>
<div class="a" style="left:1007px;top:79px;width:481px;height:527px;background:#3d3735;box-shadow:0 1px 6px rgba(0,0,0,.35);border-radius:4px 4px 0 0"></div>
<div class="a" style="left:1007px;top:79px;width:481px;height:33px;background:#4a4340;border-radius:4px 4px 0 0"></div>
<div class="a" style="left:1021px;top:87px;width:4px;height:4px;border-radius:2px;background:#aca5a2"></div>
<div class="a" style="left:1021px;top:93px;width:4px;height:4px;border-radius:2px;background:#aca5a2"></div>
<div class="a" style="left:1021px;top:99px;width:4px;height:4px;border-radius:2px;background:#aca5a2"></div>
<div class="t" style="left:1007px;top:88px;width:481px;text-align:center;font-size:13.5px;font-weight:bold;color:#aea8a5">Mission Editor</div>
<div class="a" style="left:1459px;top:83px;width:24px;height:24px;border-radius:12px;background:#5d5653"></div>
<svg class="a" style="left:1459px;top:83px" width="24" height="24"><path d="M8 8l8 8M16 8l-8 8" stroke="#fff" stroke-width="2.4"/></svg>
<div class="a" style="left:1007px;top:112px;width:481px;height:28px;background:#3f3936"></div>
<svg class="a" style="left:1007px;top:117px" width="16" height="16"><path d="M1 2h14M1 5.5h14M1 9h14M1 12.5h14" stroke="#9c9693" stroke-width="1.6"/></svg>
<div class="t" style="left:1024px;top:118px;font-size:13.5px;color:#e9e5e2">Mission Tote</div>
<svg class="a" style="left:1429px;top:115px" width="14" height="14"><rect x="2" y="2" width="11" height="11" rx="2" fill="none" stroke="#b3aeab" stroke-width="1.2"/><path d="M9.5 5.2v5L5 7.7z" fill="#b3aeab"/></svg>
<svg class="a" style="left:1461px;top:115px" width="14" height="14"><rect x="2" y="2" width="11" height="11" rx="2" fill="none" stroke="#b3aeab" stroke-width="1.2"/><path d="M4.8 4.8l5.4 5.4M10.2 4.8l-5.4 5.4" stroke="#b3aeab" stroke-width="2"/></svg>
<div class="a" style="left:1007px;top:140px;width:481px;height:23px;background:#3d3735;border-bottom:1px solid #2a2624"></div>
<div class="a" style="left:1035.5px;top:139px;width:1px;height:20px;background:#2d2927"></div>
<div class="a" style="left:1106.5px;top:139px;width:1px;height:20px;background:#2d2927"></div>
<div class="a" style="left:1188.5px;top:139px;width:1px;height:20px;background:#2d2927"></div>
<div class="a" style="left:1279.5px;top:139px;width:1px;height:20px;background:#2d2927"></div>
<div class="a" style="left:1310.5px;top:139px;width:1px;height:20px;background:#2d2927"></div>
<div class="a" style="left:1342.0px;top:139px;width:1px;height:20px;background:#2d2927"></div>
<div class="a" style="left:1371.5px;top:139px;width:1px;height:20px;background:#2d2927"></div>
<div class="t hdr" style="left:1011.0px;top:145px">ID</div>
<div class="t hdr" style="left:1040.5px;top:145px">Type</div>
<div class="t hdr" style="left:1111.0px;top:145px">Lat.</div>
<div class="t hdr" style="left:1193.0px;top:145px">Lon.</div>
<div class="t hdr" style="left:1283.5px;top:145px">Alt.</div>
<div class="t hdr" style="left:1315.0px;top:145px">P1</div>
<div class="t hdr" style="left:1347.0px;top:145px">P2</div>
<div class="t hdr" style="left:1376.0px;top:145px">P3</div>
<div class="t tbl" style="left:1011.0px;top:170px">1</div>
<div class="t tbl" style="left:1040.5px;top:170px">WAYPOINT</div>
<div class="t tbl" style="left:1111.0px;top:170px">54:07:28.6N</div>
<div class="t tbl" style="left:1193.0px;top:170px">004:43:55.5W</div>
<div class="t tbl" style="left:1283.5px;top:170px">49</div>
<div class="t tbl" style="left:1315.0px;top:170px">12.0</div>
<div class="t tbl" style="left:1347.0px;top:170px">0</div>
<div class="t tbl" style="left:1376.0px;top:170px">0</div>
<div class="t tbl" style="left:1011.0px;top:193px">2</div>
<div class="t tbl" style="left:1040.5px;top:193px">WAYPOINT</div>
<div class="t tbl" style="left:1111.0px;top:193px">54:07:32.3N</div>
<div class="t tbl" style="left:1193.0px;top:193px">004:44:07.3W</div>
<div class="t tbl" style="left:1283.5px;top:193px">60</div>
<div class="t tbl" style="left:1315.0px;top:193px">12.0</div>
<div class="t tbl" style="left:1347.0px;top:193px">0</div>
<div class="t tbl" style="left:1376.0px;top:193px">0</div>
<div class="t tbl" style="left:1011.0px;top:216px">3</div>
<div class="t tbl" style="left:1040.5px;top:216px">WAYPOINT</div>
<div class="t tbl" style="left:1111.0px;top:216px">54:07:44.8N</div>
<div class="t tbl" style="left:1193.0px;top:216px">004:43:45.9W</div>
<div class="t tbl" style="left:1283.5px;top:216px">136</div>
<div class="t tbl" style="left:1315.0px;top:216px">12.0</div>
<div class="t tbl" style="left:1347.0px;top:216px">0</div>
<div class="t tbl" style="left:1376.0px;top:216px">0</div>
<div class="t tbl" style="left:1011.0px;top:239px">4</div>
<div class="t tbl" style="left:1040.5px;top:239px">WAYPOINT</div>
<div class="t tbl" style="left:1111.0px;top:239px">54:07:55.4N</div>
<div class="t tbl" style="left:1193.0px;top:239px">004:43:52.0W</div>
<div class="t tbl" style="left:1283.5px;top:239px">200</div>
<div class="t tbl" style="left:1315.0px;top:239px">12.0</div>
<div class="t tbl" style="left:1347.0px;top:239px">0</div>
<div class="t tbl" style="left:1376.0px;top:239px">0</div>
<div class="t tbl" style="left:1011.0px;top:262px">5</div>
<div class="t tbl" style="left:1040.5px;top:262px">WAYPOINT</div>
<div class="t tbl" style="left:1111.0px;top:262px">54:08:00.2N</div>
<div class="t tbl" style="left:1193.0px;top:262px">004:43:20.6W</div>
<div class="t tbl" style="left:1283.5px;top:262px">275</div>
<div class="t tbl" style="left:1315.0px;top:262px">12.0</div>
<div class="t tbl" style="left:1347.0px;top:262px">0</div>
<div class="t tbl" style="left:1376.0px;top:262px">0</div>
<div class="t tbl" style="left:1011.0px;top:285px">6</div>
<div class="t tbl" style="left:1040.5px;top:285px">WAYPOINT</div>
<div class="t tbl" style="left:1111.0px;top:285px">54:08:14.2N</div>
<div class="t tbl" style="left:1193.0px;top:285px">004:43:11.0W</div>
<div class="t tbl" style="left:1283.5px;top:285px">275</div>
<div class="t tbl" style="left:1315.0px;top:285px">12.0</div>
<div class="t tbl" style="left:1347.0px;top:285px">0</div>
<div class="t tbl" style="left:1376.0px;top:285px">0</div>
<div class="t tbl" style="left:1011.0px;top:308px">7</div>
<div class="t tbl" style="left:1040.5px;top:308px">WAYPOINT</div>
<div class="t tbl" style="left:1111.0px;top:308px">54:08:41.4N</div>
<div class="t tbl" style="left:1193.0px;top:308px">004:42:43.6W</div>
<div class="t tbl" style="left:1283.5px;top:308px">120</div>
<div class="t tbl" style="left:1315.0px;top:308px">12.0</div>
<div class="t tbl" style="left:1347.0px;top:308px">0</div>
<div class="t tbl" style="left:1376.0px;top:308px">0</div>
<div class="t tbl" style="left:1011.0px;top:331px">8</div>
<div class="t tbl" style="left:1040.5px;top:331px">WAYPOINT</div>
<div class="t tbl" style="left:1111.0px;top:331px">54:08:46.7N</div>
<div class="t tbl" style="left:1193.0px;top:331px">004:42:17.7W</div>
<div class="t tbl" style="left:1283.5px;top:331px">90</div>
<div class="t tbl" style="left:1315.0px;top:331px">12.0</div>
<div class="t tbl" style="left:1347.0px;top:331px">0</div>
<div class="t tbl" style="left:1376.0px;top:331px">0</div>
<div class="t tbl" style="left:1011.0px;top:354px">9</div>
<div class="t tbl" style="left:1040.5px;top:354px">WAYPOINT</div>
<div class="t tbl" style="left:1111.0px;top:354px">54:08:59.1N</div>
<div class="t tbl" style="left:1193.0px;top:354px">004:41:41.8W</div>
<div class="t tbl" style="left:1283.5px;top:354px">110</div>
<div class="t tbl" style="left:1315.0px;top:354px">12.0</div>
<div class="t tbl" style="left:1347.0px;top:354px">0</div>
<div class="t tbl" style="left:1376.0px;top:354px">0</div>
<div class="t tbl" style="left:1011.0px;top:377px">10</div>
<div class="t tbl" style="left:1040.5px;top:377px">WAYPOINT</div>
<div class="t tbl" style="left:1111.0px;top:377px">54:09:08.5N</div>
<div class="t tbl" style="left:1193.0px;top:377px">004:40:20.4W</div>
<div class="t tbl" style="left:1283.5px;top:377px">315</div>
<div class="t tbl" style="left:1315.0px;top:377px">12.0</div>
<div class="t tbl" style="left:1347.0px;top:377px">0</div>
<div class="t tbl" style="left:1376.0px;top:377px">0</div>
<div class="t tbl" style="left:1011.0px;top:400px">11</div>
<div class="t tbl" style="left:1040.5px;top:400px">WAYPOINT</div>
<div class="t tbl" style="left:1111.0px;top:400px">54:08:53.5N</div>
<div class="t tbl" style="left:1193.0px;top:400px">004:40:07.9W</div>
<div class="t tbl" style="left:1283.5px;top:400px">315</div>
<div class="t tbl" style="left:1315.0px;top:400px">12.0</div>
<div class="t tbl" style="left:1347.0px;top:400px">0</div>
<div class="t tbl" style="left:1376.0px;top:400px">0</div>
<div class="t tbl" style="left:1011.0px;top:423px">12</div>
<div class="t tbl" style="left:1040.5px;top:423px">WAYPOINT</div>
<div class="t tbl" style="left:1111.0px;top:423px">54:08:35.7N</div>
<div class="t tbl" style="left:1193.0px;top:423px">004:40:41.5W</div>
<div class="t tbl" style="left:1283.5px;top:423px">130</div>
<div class="t tbl" style="left:1315.0px;top:423px">12.0</div>
<div class="t tbl" style="left:1347.0px;top:423px">0</div>
<div class="t tbl" style="left:1376.0px;top:423px">0</div>
<div class="t tbl" style="left:1011.0px;top:446px">13</div>
<div class="t tbl" style="left:1040.5px;top:446px">WAYPOINT</div>
<div class="t tbl" style="left:1111.0px;top:446px">54:08:02.6N</div>
<div class="t tbl" style="left:1193.0px;top:446px">004:42:11.4W</div>
<div class="t tbl" style="left:1283.5px;top:446px">195</div>
<div class="t tbl" style="left:1315.0px;top:446px">12.0</div>
<div class="t tbl" style="left:1347.0px;top:446px">0</div>
<div class="t tbl" style="left:1376.0px;top:446px">0</div>
<div class="t tbl" style="left:1011.0px;top:469px">14</div>
<div class="t tbl" style="left:1040.5px;top:469px">WAYPOINT</div>
<div class="t tbl" style="left:1111.0px;top:469px">54:07:33.4N</div>
<div class="t tbl" style="left:1193.0px;top:469px">004:42:48.7W</div>
<div class="t tbl" style="left:1283.5px;top:469px">50</div>
<div class="t tbl" style="left:1315.0px;top:469px">12.0</div>
<div class="t tbl" style="left:1347.0px;top:469px">0</div>
<div class="t tbl" style="left:1376.0px;top:469px">0</div>
<div class="t tbl" style="left:1040.5px;top:492px">RTH</div>
<div class="t tbl" style="left:1111.0px;top:492px">00:00:00.0N</div>
<div class="t tbl" style="left:1193.0px;top:492px">000:00:00.0E</div>
<div class="t tbl" style="left:1283.5px;top:492px">0</div>
<div class="t tbl" style="left:1315.0px;top:492px">1</div>
<div class="t tbl" style="left:1347.0px;top:492px">0</div>
<div class="t tbl" style="left:1376.0px;top:492px">0</div>
<div class="a" style="left:1014px;top:620px;width:524px;height:1px;background:#2c2826"></div>
<svg class="a" style="left:1015px;top:633px" width="15" height="15"><circle cx="7.5" cy="7.5" r="7" fill="#b3ada9"/><path d="M7.5 3.5v5" stroke="#3b3532" stroke-width="2.2"/><circle cx="7.5" cy="11" r="1.2" fill="#3b3532"/></svg>
<div class="t" style="left:1033px;top:634px;font-size:13.5px;color:#e9e5e2">Battery Monitor</div>
<svg class="a" style="left:1477px;top:631px" width="14" height="14"><rect x="2" y="2" width="11" height="11" rx="2" fill="none" stroke="#b3aeab" stroke-width="1.2"/><path d="M9.5 5.2v5L5 7.7z" fill="#b3aeab"/></svg>
<svg class="a" style="left:1509px;top:631px" width="14" height="14"><rect x="2" y="2" width="11" height="11" rx="2" fill="none" stroke="#b3aeab" stroke-width="1.2"/><path d="M4.8 4.8l5.4 5.4M10.2 4.8l-5.4 5.4" stroke="#b3aeab" stroke-width="2"/></svg>
<div class="a" style="left:1073px;top:654px;width:352px;height:167px;background:#3f3936;box-shadow:0 1px 5px rgba(0,0,0,.4);border-radius:4px 4px 0 0"></div>
<div class="a" style="left:1073px;top:654px;width:352px;height:31px;background:#4b4441;border-radius:4px 4px 0 0"></div>
<div class="a" style="left:1087px;top:661px;width:4px;height:4px;border-radius:2px;background:#aca5a2"></div>
<div class="a" style="left:1087px;top:667px;width:4px;height:4px;border-radius:2px;background:#aca5a2"></div>
<div class="a" style="left:1087px;top:673px;width:4px;height:4px;border-radius:2px;background:#aca5a2"></div>
<div class="t" style="left:1073px;top:662px;width:352px;text-align:center;font-size:13.5px;font-weight:bold;color:#b5afac">Terrain Analysis</div>
<div class="a" style="left:1398px;top:657px;width:23px;height:23px;border-radius:12px;background:#5d5653"></div>
<svg class="a" style="left:1398px;top:657px" width="23" height="23"><path d="M7.5 7.5l8 8M15.5 7.5l-8 8" stroke="#fff" stroke-width="2.3"/></svg>
<div class="a" style="left:1176px;top:685px;width:248px;height:30px;background:#3a3431;border-bottom:2px solid #77716e"></div>
<div class="a" style="left:1176px;top:715px;width:248px;height:28px;background:#3a3431;border-bottom:2px solid #77716e"></div>
<div class="t" style="left:1088px;top:694px;font-size:13.5px;color:#e9e5e2">Nominal Home</div>
<div class="t" style="left:1188px;top:695px;font-size:12.8px;color:#c9c4c1;letter-spacing:-0.2px">54:07:29.7N 004:43:47.3W</div>
<div class="t" style="left:1075px;top:722px;font-size:13.5px;color:#e9e5e2">Margin Elevation</div>
<div class="t" style="left:1181px;top:723px;font-size:12.8px;color:#c9c4c1">40</div>
<div class="t" style="left:1078px;top:747px;font-size:13.5px;color:#e9e5e2">Replace Mission</div>
<div class="ck ckoff" style="left:1179px;top:746px;width:17px;height:17px"></div>
<div class="a" style="left:1238px;top:779px;width:85px;height:29px;background:#4f4845;border-radius:3px;box-shadow:0 1px 1px rgba(0,0,0,.3)"></div>
<div class="t" style="left:1238px;top:786px;width:85px;text-align:center;font-size:13.5px;font-weight:bold;color:#a9a3a0">Apply</div>
<div class="a" style="left:1327px;top:779px;width:85px;height:29px;background:#4f4845;border-radius:3px;box-shadow:0 1px 1px rgba(0,0,0,.3)"></div>
<div class="t" style="left:1327px;top:786px;width:85px;text-align:center;font-size:13.5px;font-weight:bold;color:#a9a3a0">Close</div>
<div id="status" class="a"></div>
<div class="t" style="left:0;top:879px;font-size:13.5px;color:#ece8e5;letter-spacing:-0.3px">50:54:37.4N 001:32:03.6W</div>
<svg class="a" style="left:738px;top:876px" width="18" height="18"><rect width="18" height="18" rx="3.5" fill="#b5772a"/><path d="M4.5 9.3l3 3 6-6.5" fill="none" stroke="#fff" stroke-width="2.4"/></svg>
<svg class="a" style="left:829px;top:876px" width="18" height="18"><rect width="18" height="18" rx="3.5" fill="#b5772a"/><path d="M4.5 9.3l3 3 6-6.5" fill="none" stroke="#fff" stroke-width="2.4"/></svg>
<div class="ck ckoff" style="left:918px;top:876px"></div>
<div class="ck ckoff" style="left:1010px;top:876px"></div>
<div class="t" style="left:765px;top:879px;font-size:13.5px;color:#ece8e5">In View</div>
<div class="t" style="left:856px;top:879px;font-size:13.5px;color:#ece8e5">Follow</div>
<div class="t" style="left:945px;top:879px;font-size:13.5px;color:#ece8e5">Logger</div>
<div class="t" style="left:1036px;top:879px;font-size:13.5px;color:#ece8e5">Audio</div>
<div class="t" style="left:1343px;top:879px;font-size:13.5px;color:#ece8e5">00:00</div>
<div class="t" style="left:1396px;top:879px;font-size:13.5px;color:#ece8e5">Path: 10291m, fly: 14:59</div>
<div id="gp" class="a">
<div id="gptitle" class="a">
 <div class="a" style="left:14px;top:8px;width:4px;height:4px;border-radius:2px;background:#b9b1ad"></div>
 <div class="a" style="left:14px;top:14px;width:4px;height:4px;border-radius:2px;background:#b9b1ad"></div>
 <div class="a" style="left:14px;top:20px;width:4px;height:4px;border-radius:2px;background:#b9b1ad"></div>
 <div class="a" style="left:0;top:0;width:642px;height:31px;line-height:31px;text-align:center;color:#ece8e6;font-weight:bold;font-size:13.5px;letter-spacing:-0.1px">Gnuplot window 0</div>
 <div class="a" style="left:562px;top:18px;width:8px;height:2px;background:#cfc8c4"></div>
 <div class="a" style="left:592px;top:12px;width:8px;height:8px;border:2px solid #cfc8c4"></div>
 <div class="a" style="left:614px;top:4px;width:24px;height:24px;border-radius:12px;background:#d9650b"></div>
 <svg class="a" style="left:614px;top:4px" width="24" height="24"><path d="M8 8L16 16M16 8L8 16" stroke="#fff" stroke-width="2.4"/></svg>
</div>
<div id="gptool" class="a">
<svg class="a" style="left:0;top:0" width="642" height="37" viewBox="98 143 642 37">
 <defs><linearGradient id="pg" x1="0" y1="0" x2="0" y2="1"><stop offset="0" stop-color="#ececec"/><stop offset="1" stop-color="#fbfbfb"/></linearGradient>
 <radialGradient id="gr" cx=".4" cy=".35" r=".7"><stop offset="0" stop-color="#3fc03f"/><stop offset="1" stop-color="#0a6e0a"/></radialGradient>
 <radialGradient id="lens" cx=".4" cy=".35" r=".7"><stop offset="0" stop-color="#d4efff"/><stop offset="1" stop-color="#86c2ea"/></radialGradient></defs>
 <g fill="#bdbdbd"><circle cx="103.5" cy="155" r=".7"/><circle cx="106.5" cy="155" r=".7"/><circle cx="103.5" cy="158" r=".7"/><circle cx="106.5" cy="158" r=".7"/><circle cx="103.5" cy="161" r=".7"/><circle cx="106.5" cy="161" r=".7"/><circle cx="103.5" cy="164" r=".7"/><circle cx="106.5" cy="164" r=".7"/><circle cx="103.5" cy="167" r=".7"/><circle cx="106.5" cy="167" r=".7"/><circle cx="103.5" cy="170" r=".7"/><circle cx="106.5" cy="170" r=".7"/></g>
 <path d="M115.5 150.5H134L139 159.5L131 166.5L127 172.5H115.5Z" fill="url(#pg)" stroke="#bcbcbc" stroke-width="1"/>
 <path d="M131 155.5L136 160L129 165.5M126 158.5H134M124 162H132" fill="none" stroke="#c8c8c8" stroke-width="1"/>
 <path d="M118 173.2H135" stroke="#c4c4c4" stroke-width="1"/>
 <path d="M145 160h8l-4 4z" fill="#4a4a4a"/>
 <path d="M177.5 155.2A8.5 8.5 0 1 0 178.5 167.5" fill="none" stroke="#0d700d" stroke-width="6.4"/>
 <path d="M177.5 155.2A8.5 8.5 0 1 0 178.5 167.5" fill="none" stroke="url(#gr)" stroke-width="4.6"/>
 <path d="M173.5 151L184 151.5L183 161.5Z" fill="#178a17" stroke="#0d700d" stroke-width=".8"/>
 <path d="M199 150v24M205 150v24M211 150v24M193 155.7h24M193 162h24M193 168h24" stroke="#7c7c7c" stroke-width="1.9"/>
 <g stroke="#6e6e6e" stroke-width="2.4" stroke-linecap="round"><path d="M239 163l9.5 8.5"/><path d="M272 163l9.5 8.5"/><path d="M305 163l9.5 8.5"/></g>
 <g fill="url(#lens)" stroke="#5b7ea3" stroke-width="1.6"><circle cx="233.4" cy="157.7" r="5.8"/><circle cx="266.4" cy="157.7" r="5.8"/><circle cx="299.3" cy="157.7" r="5.8"/></g>
 <path d="M230 157.7h7M263 157.7h7M266.4 154.3v6.8" stroke="#2a5a8a" stroke-width="1.5"/>
 <path d="M298 154.5L300 153.5V161" fill="none" stroke="#2a5a8a" stroke-width="1.4"/>
 <path d="M327.5 171.5L341 158" stroke="#3c3c3c" stroke-width="3.6" stroke-linecap="round"/>
 <circle cx="327.8" cy="171.2" r=".9" fill="#ddd"/>
 <circle cx="344.5" cy="154.5" r="4.6" fill="#8a8a8a"/>
 <path d="M344.5 154.5L350 147L352 152Z" fill="#f3f1f2"/>
</svg>
</div>
<svg class="a" style="left:0;top:73px" width="642" height="479" viewBox="98 184 642 479">
<rect x="98" y="184" width="642" height="479" fill="#fffdff"/>
<path d="M166.9 263V618 M178.6 263V618 M205.1 263V618 M221.8 263V618 M250.3 263V618 M272.8 263V618 M320.0 263V618 M344.1 263V618 M380.7 263V618 M453.4 263V618 M478.3 263V618 M518.1 263V618 M611.3 263V618 M665.9 263V618 M159.5 559.6H717.4 M159.5 517.2H717.4 M159.5 474.7H717.4 M159.5 432.3H717.4 M159.5 389.9H717.4 M159.5 347.5H717.4 M159.5 305.1H717.4 M159.5 262.6H717.4" stroke="#c8c8c8" stroke-width="1" stroke-dasharray="1 2" fill="none"/>
<polygon points="159.5,561.0 163.0,556.0 166.3,555.0 169.0,560.0 172.6,572.0 176.0,592.0 179.0,610.6 182.0,600.0 186.8,582.5 190.0,555.0 193.8,526.0 201.0,512.0 206.0,497.0 211.5,482.0 214.0,486.0 216.8,497.6 219.0,515.0 221.4,538.0 223.0,520.0 225.6,497.6 230.0,470.0 236.2,434.0 243.0,418.0 250.3,406.0 256.0,392.0 261.0,381.0 265.0,372.0 269.7,364.7 273.0,366.0 276.8,374.0 281.0,395.0 287.4,427.0 296.2,448.0 300.0,460.0 307.5,479.0 318.8,494.0 326.0,505.0 333.8,516.4 345.0,522.0 352.0,526.0 358.0,527.7 364.0,521.0 371.2,512.6 386.2,497.6 401.2,490.0 412.5,475.0 423.8,452.6 435.0,434.0 445.0,418.7 454.7,397.5 462.4,362.7 467.0,340.0 470.1,331.8 473.0,336.0 475.9,347.3 483.7,385.9 495.3,432.2 506.8,474.7 518.4,497.9 524.0,508.0 530.0,525.0 535.0,505.0 541.6,486.3 551.3,474.7 562.0,472.0 574.5,470.9 584.2,455.4 596.6,436.2 606.2,431.3 613.1,436.2 621.4,455.5 629.7,480.4 639.4,510.7 647.7,535.6 654.6,543.8 665.6,560.4 675.3,557.6 682.2,560.4 697.4,578.3 709.8,571.4 717.3,564.5 717.4,618.0 159.5,618.0" fill="#00d800"/>
<polyline points="159.5,561.4 166.9,521.4 178.6,512.3 205.1,446.0 221.8,393.5 250.3,330.6 272.3,330.6 318.3,456.6 344.2,487.0 380.8,470.0 453.5,296.3 478.4,296.3 518.3,452.3 611.4,397.6 666.1,520.4 666.1,541.6 717.4,541.6" fill="none" stroke="#ee1111" stroke-width="2" stroke-linejoin="miter"/>
<path d="M159.5 529.0 C160.6 527.6 164.1 519.5 166.3 520.8 C168.5 522.1 170.5 527.0 172.6 536.7 C174.7 546.4 176.6 577.3 179.0 579.0 C181.4 580.7 184.3 561.4 186.8 547.0 C189.3 532.6 190.9 506.1 193.8 492.6 C196.7 479.1 201.2 473.4 204.4 466.0 C207.6 458.6 211.0 448.0 213.2 448.0 C215.4 448.0 216.4 455.9 217.8 466.0 C219.2 476.1 219.5 510.2 221.4 508.5 C223.3 506.8 226.5 470.8 229.0 455.5 C231.5 440.2 232.9 429.3 236.2 416.6 C239.4 403.9 245.3 387.4 248.5 379.5 C251.7 371.6 252.1 377.1 255.6 369.0 C259.1 360.9 266.2 335.1 269.7 330.7 C273.2 326.3 273.6 330.7 276.8 342.4 C280.0 354.1 285.8 388.9 289.0 400.7 C292.2 412.5 294.0 407.8 296.2 413.0 C298.4 418.2 299.5 425.4 302.0 432.0 C304.5 438.6 307.6 447.3 311.0 452.6 C314.4 457.9 318.1 458.4 322.5 464.0 C326.9 469.6 331.6 481.3 337.5 486.4 C343.4 491.5 351.8 495.8 358.0 494.6 C364.2 493.4 369.7 484.4 375.0 479.0 C380.3 473.6 385.0 467.7 390.0 462.0 C395.0 456.3 400.0 451.6 405.0 445.0 C410.0 438.4 415.0 430.7 420.0 422.6 C425.0 414.5 430.8 402.4 435.0 396.3 C439.2 390.2 442.1 390.2 445.0 385.9 C447.9 381.6 449.8 380.0 452.7 370.4 C455.6 360.8 459.3 340.4 462.4 328.0 C465.5 315.6 468.7 297.6 471.3 296.3 C473.9 295.0 475.2 305.3 477.9 320.2 C480.6 335.1 483.3 366.6 487.5 385.9 C491.7 405.2 498.5 423.1 503.0 436.0 C507.5 448.9 510.1 453.4 514.6 463.0 C519.1 472.6 525.5 493.9 530.0 493.3 C534.5 492.7 537.7 468.2 541.6 459.3 C545.5 450.4 548.0 443.6 553.2 440.0 C558.4 436.4 567.4 440.9 572.6 438.0 C577.8 435.1 580.2 428.7 584.2 422.6 C588.2 416.6 592.9 405.9 596.6 401.7 C600.3 397.5 603.7 397.8 606.2 397.6 C608.7 397.4 609.3 395.8 611.8 400.4 C614.3 405.0 617.9 415.5 621.4 425.2 C624.9 434.9 628.4 445.4 632.5 458.3 C636.6 471.2 642.8 493.8 646.3 502.5 C649.8 511.2 650.0 506.3 653.2 510.7 C656.4 515.1 662.4 526.4 665.6 528.7 C668.8 531.0 670.0 525.4 672.5 524.5 C675.0 523.6 677.8 521.2 680.8 523.1 C683.8 525.0 687.7 531.9 690.5 535.6 C693.3 539.3 694.6 544.3 697.4 545.2 C700.1 546.1 703.7 543.9 707.0 541.1 C710.3 538.4 715.6 530.8 717.3 528.7" fill="none" stroke="#0000ee" stroke-width="2"/>
<rect x="159.5" y="262.5" width="557.9" height="355.5" fill="none" stroke="#000" stroke-width="1.2"/>
<path d="M159.5 602.0h6M717.4 602.0h-6 M159.5 559.6h6M717.4 559.6h-6 M159.5 517.2h6M717.4 517.2h-6 M159.5 474.7h6M717.4 474.7h-6 M159.5 432.3h6M717.4 432.3h-6 M159.5 389.9h6M717.4 389.9h-6 M159.5 347.5h6M717.4 347.5h-6 M159.5 305.1h6M717.4 305.1h-6 M159.5 262.6h6M717.4 262.6h-6 M159.5 262.5v6 M166.9 262.5v6 M178.6 262.5v6 M205.1 262.5v6 M221.8 262.5v6 M250.3 262.5v6 M272.8 262.5v6 M320.0 262.5v6 M344.1 262.5v6 M380.7 262.5v6 M453.4 262.5v6 M478.3 262.5v6 M518.1 262.5v6 M611.3 262.5v6 M665.9 262.5v6 M717.4 262.5v6" stroke="#000" stroke-width="1.2" fill="none"/>
<g font-family="Liberation Sans" font-size="13.5" fill="#1a1a1a">
<text x="439" y="211" text-anchor="middle">Mission Elevation</text>
<text x="153" y="607.6" text-anchor="end">150</text>
<text x="153" y="565.2" text-anchor="end">200</text>
<text x="153" y="522.8" text-anchor="end">250</text>
<text x="153" y="480.3" text-anchor="end">300</text>
<text x="153" y="437.9" text-anchor="end">350</text>
<text x="153" y="395.5" text-anchor="end">400</text>
<text x="153" y="353.1" text-anchor="end">450</text>
<text x="153" y="310.7" text-anchor="end">500</text>
<text x="153" y="268.2" text-anchor="end">550</text>
<text transform="translate(115 440) rotate(-90)" text-anchor="middle">Elevation</text>
<text x="438" y="661" text-anchor="middle">Distance</text>
<text transform="translate(161.5 647.5) rotate(-45)" font-size="13">0</text>
<text transform="translate(168.9 647.5) rotate(-45)" font-size="13">152</text>
<text transform="translate(180.6 647.5) rotate(-45)" font-size="13">394</text>
<text transform="translate(207.1 647.5) rotate(-45)" font-size="13">940</text>
<text transform="translate(223.8 647.5) rotate(-45)" font-size="13">1285</text>
<text transform="translate(252.3 647.5) rotate(-45)" font-size="13">1872</text>
<text transform="translate(274.8 647.5) rotate(-45)" font-size="13">2336</text>
<text transform="translate(322.0 647.5) rotate(-45)" font-size="13">3310</text>
<text transform="translate(346.1 647.5) rotate(-45)" font-size="13">3807</text>
<text transform="translate(382.7 647.5) rotate(-45)" font-size="13">4561</text>
<text transform="translate(455.4 647.5) rotate(-45)" font-size="13">6061</text>
<text transform="translate(480.3 647.5) rotate(-45)" font-size="13">6575</text>
<text transform="translate(520.1 647.5) rotate(-45)" font-size="13">7396</text>
<text transform="translate(613.3 647.5) rotate(-45)" font-size="13">9316</text>
<text transform="translate(667.9 647.5) rotate(-45)" font-size="13">10443</text>
<text transform="translate(719.4 647.5) rotate(-45)" font-size="13">11509</text>
<text transform="translate(163.5 259.5) rotate(-45)" font-size="12.3">Home</text>
<text transform="translate(170.9 259.5) rotate(-45)" font-size="12.3">WP1</text>
<text transform="translate(182.6 259.5) rotate(-45)" font-size="12.3">WP2</text>
<text transform="translate(209.1 259.5) rotate(-45)" font-size="12.3">WP3</text>
<text transform="translate(225.8 259.5) rotate(-45)" font-size="12.3">WP4</text>
<text transform="translate(254.3 259.5) rotate(-45)" font-size="12.3">WP5</text>
<text transform="translate(276.8 259.5) rotate(-45)" font-size="12.3">WP6</text>
<text transform="translate(324.0 259.5) rotate(-45)" font-size="12.3">WP7</text>
<text transform="translate(348.1 259.5) rotate(-45)" font-size="12.3">WP8</text>
<text transform="translate(384.7 259.5) rotate(-45)" font-size="12.3">WP9</text>
<text transform="translate(457.4 259.5) rotate(-45)" font-size="12.3">WP10</text>
<text transform="translate(482.3 259.5) rotate(-45)" font-size="12.3">WP11</text>
<text transform="translate(522.1 259.5) rotate(-45)" font-size="12.3">WP12</text>
<text transform="translate(615.3 259.5) rotate(-45)" font-size="12.3">WP13</text>
<text transform="translate(669.9 259.5) rotate(-45)" font-size="12.3">WP14</text>
<text transform="translate(721.4 259.5) rotate(-45)" font-size="12.3">RTH</text>
</g>
<rect x="613.5" y="268.5" width="97" height="45" fill="#fff" stroke="#000" stroke-width="1"/>
<g font-family="Liberation Sans" font-size="13" fill="#1a1a1a" text-anchor="end"><text x="665" y="281">Terrain</text><text x="665" y="296">Mission</text><text x="665" y="311">Margin</text></g>
<rect x="669" y="271" width="36" height="11" fill="#00d800"/>
<path d="M669 291.5h36" stroke="#ee1111" stroke-width="2"/><path d="M669 306.5h36" stroke="#0000ee" stroke-width="2"/>
</svg>
<div id="gpstat" class="a"><div class="a" style="left:6px;top:3px;font-size:11.6px;color:#2e2e2e;white-space:nowrap">x = 11531.7 y = 615.98 x2 = 11531.7</div>
<svg class="a" style="left:626px;top:6px" width="14" height="14"><g fill="#c8c8cc"><circle cx="11" cy="3" r="1"/><circle cx="11" cy="7" r="1"/><circle cx="7" cy="7" r="1"/><circle cx="11" cy="11" r="1"/><circle cx="7" cy="11" r="1"/><circle cx="3" cy="11" r="1"/></g></svg>
</div>
</div>
</body></html>
